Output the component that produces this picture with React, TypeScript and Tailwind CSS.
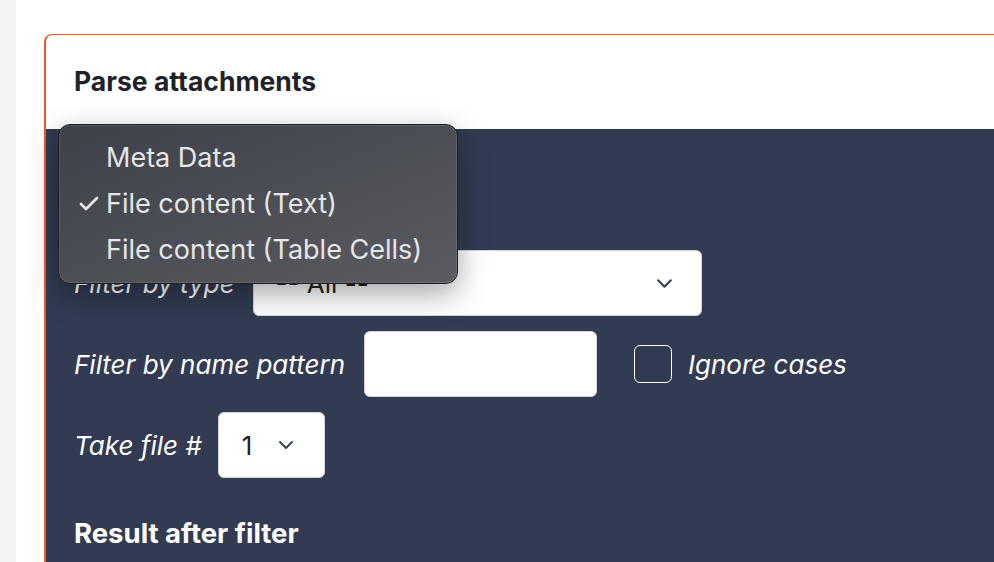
import { Check } from "lucide-react"

const font = { fontFamily: "Inter, 'Noto Sans', sans-serif" }

function Chevron({ className }: { className?: string }) {
  return (
    <svg viewBox="0 0 16 10" className={className} fill="none" stroke="currentColor" strokeWidth={2} strokeLinecap="round" strokeLinejoin="round">
      <path d="M2 2 L8 8 L14 2" />
    </svg>
  )
}

export default function App() {
  return (
    <div className="flex h-[562px] w-[994px] overflow-hidden bg-white" style={font}>
      <div className="w-4 shrink-0 bg-[#f3f4f6]" />

      <div className="relative ml-7 mt-[34px] flex-1 rounded-tl-lg border-l-2 border-t border-[#f05a28]">
        <div className="px-[28px] pt-[30px] pb-[32px]">
          <h1 className="text-[26.5px] font-bold leading-8 text-[#1f2329]">Parse attachments</h1>
        </div>

        <div className="flex h-full flex-col gap-[15px] bg-[#323b52] px-[28px] pt-10 text-white">
          {/* row hidden behind the open menu */}
          <div className="flex items-center gap-[18px]">
            <div className="h-[66px] w-[110px]" />
            <div className="h-[66px] w-[240px] rounded-md bg-white" />
          </div>

          <div className="flex items-center gap-[18px]">
            <span className="text-[26px] italic">Filter by type</span>
            <div className="flex h-[66px] w-[449px] items-center justify-between rounded-md border border-[#d1d5db] bg-white pl-[22px] pr-[28px] text-[26px] text-[#222]">
              -- All --
              <Chevron className="h-[11px] w-[17px] text-[#374151]" />
            </div>
          </div>

          <div className="flex items-center">
            <span className="text-[26px] italic">Filter by name pattern</span>
            <div className="ml-[19px] h-[66px] w-[233px] rounded-md border border-[#d1d5db] bg-white" />
            <div className="ml-[37px] h-[38px] w-[38px] rounded-md border border-white" />
            <span className="ml-4 text-[26px] italic">Ignore cases</span>
          </div>

          <div className="flex items-center gap-[16px]">
            <span className="text-[26px] italic">Take file #</span>
            <div className="flex h-[66px] w-[107px] items-center gap-[26px] rounded-md border border-[#d1d5db] bg-white pl-[23px] text-[26px] text-[#222]">
              1
              <Chevron className="h-[10px] w-4 text-[#374151]" />
            </div>
          </div>

          <h2 className="mt-[20px] text-[27.5px] font-bold">Result after filter</h2>
        </div>

        {/* native popup menu */}
        <div className="absolute left-[12px] top-[89px] w-[400px] rounded-xl border border-[#1e1f22] bg-gradient-to-br from-[#3e414a] to-[#5b5c61] py-[10px] text-[27px] text-[#e6e6e6] shadow-[0_10px_30px_rgba(0,0,0,0.35)] ring-1 ring-inset ring-white/10">
          <div className="flex h-[46px] items-center pl-[47px]">Meta Data</div>
          <div className="relative flex h-[46px] items-center pl-[47px]">
            <Check className="absolute left-[18px] h-6 w-6" strokeWidth={2.75} />
            File content (Text)
          </div>
          <div className="flex h-[46px] items-center pl-[47px]">File content (Table Cells)</div>
        </div>
      </div>
    </div>
  )
}
